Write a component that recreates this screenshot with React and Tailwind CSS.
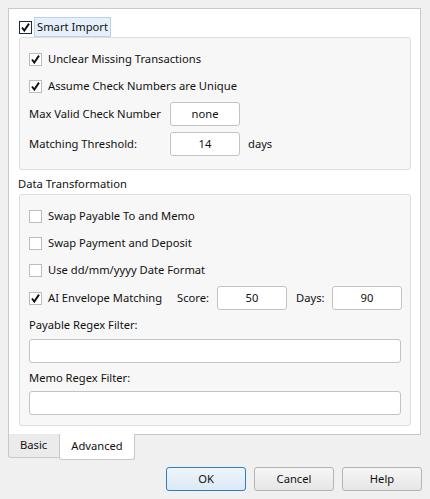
import React from 'react';

const font = "font-['Segoe_UI','Noto_Sans','Open_Sans',sans-serif]";

const Check = ({ checked, dark }) => (
  <span
    className={`w-[13px] h-[13px] shrink-0 flex items-center justify-center bg-white border ${
      dark ? 'border-[#1b2a3a]' : 'border-[#bcbcbc]'
    }`}
  >
    {checked && (
      <svg width="11" height="11" viewBox="0 0 11 11">
        <path d="M2 5.5 L4.3 8.6 L9 1.6" fill="none" stroke="#111" strokeWidth="1.9" />
      </svg>
    )}
  </span>
);

const CheckRow = ({ checked, label, className = '' }) => (
  <div className={`flex items-center h-[20px] shrink-0 ${className}`}>
    <Check checked={checked} />
    <span className="ml-[6px]">{label}</span>
  </div>
);

const Field = ({ value, className = '' }) => (
  <div
    className={`h-[24px] shrink-0 bg-white border border-[#c3c3c3] rounded-[3px] flex items-center justify-center ${className}`}
  >
    {value}
  </div>
);

const Group = ({ children, className = '' }) => (
  <div className={`bg-[#f7f7f7] border border-[#dedede] rounded-[3px] px-[9px] ${className}`}>
    {children}
  </div>
);

const Button = ({ label, primary }) => (
  <button
    className={`w-[80px] h-[24px] rounded-[3px] border text-[11.2px] text-[#111] ${
      primary
        ? 'border-[#2f7fbf] bg-gradient-to-b from-[#eef5fc] to-[#dde9f5]'
        : 'border-[#b4b4b4] bg-gradient-to-b from-[#f6f6f6] to-[#e6e6e6]'
    }`}
  >
    {label}
  </button>
);

export default function App() {
  return (
    <div className={`w-[430px] h-[499px] bg-[#f0f0f0] text-[11.2px] text-[#111] whitespace-nowrap ${font} pt-[8px]`}>
      {/* Tab pane */}
      <div className="ml-[8px] mr-[9px] h-[427px] bg-white border border-[#c9c9c9] pl-[10px] pr-[9px]">
        <div className="flex items-center mt-[8px] h-[20px]">
          <Check checked dark />
          <span className="ml-[2px] h-[20px] px-[2px] flex items-center bg-[#e6f0fa] border border-[#b9d3ea]">
            Smart Import
          </span>
        </div>

        <Group className="pt-[11px] pb-[13px]">
          <CheckRow checked label="Unclear Missing Transactions" />
          <CheckRow checked label="Assume Check Numbers are Unique" className="mt-[7px]" />
          <div className="flex items-center mt-[6px]">
            <span className="w-[141px] shrink-0">Max Valid Check Number</span>
            <Field value="none" className="w-[70px]" />
          </div>
          <div className="flex items-center mt-[6px]">
            <span className="w-[141px] shrink-0">Matching Threshold:</span>
            <Field value="14" className="w-[70px]" />
            <span className="ml-[8px]">days</span>
          </div>
        </Group>

        <div className="h-[20px] flex items-center mt-[4px] -ml-[1px]">Data Transformation</div>

        <Group className="pt-[11px] pb-[10px]">
          <CheckRow label="Swap Payable To and Memo" />
          <CheckRow label="Swap Payment and Deposit" className="mt-[7px]" />
          <CheckRow label="Use dd/mm/yyyy Date Format" className="mt-[7px]" />
          <div className="flex items-center mt-[6px]">
            <CheckRow checked label="AI Envelope Matching" className="w-[135px]" />
            <span className="ml-[13px] w-[40px] shrink-0">Score:</span>
            <Field value="50" className="w-[70px]" />
            <span className="ml-[9px] w-[36px] shrink-0">Days:</span>
            <Field value="90" className="w-[70px]" />
          </div>
          <div className="h-[20px] flex items-center mt-[5px]">Payable Regex Filter:</div>
          <Field value="" className="mt-[4px] h-[23px]" />
          <div className="h-[20px] flex items-center mt-[5px]">Memo Regex Filter:</div>
          <Field value="" className="mt-[3px] h-[23px]" />
        </Group>
      </div>

      {/* Tabs */}
      <div className="flex ml-[8px] -mt-[1px]">
        <div className="w-[52px] h-[24px] bg-[#ebebeb] border border-t-0 border-[#c9c9c9] rounded-bl-[3px] flex items-center pl-[11px]">
          Basic
        </div>
        <div className="w-[76px] h-[26px] bg-white border border-t-0 border-[#c9c9c9] rounded-b-[3px] flex items-center justify-center -ml-[1px]">
          Advanced
        </div>
      </div>

      {/* Buttons */}
      <div className="flex justify-end gap-[8px] mr-[8px] mt-[7px]">
        <Button label="OK" primary />
        <Button label="Cancel" />
        <Button label="Help" />
      </div>
    </div>
  );
}
